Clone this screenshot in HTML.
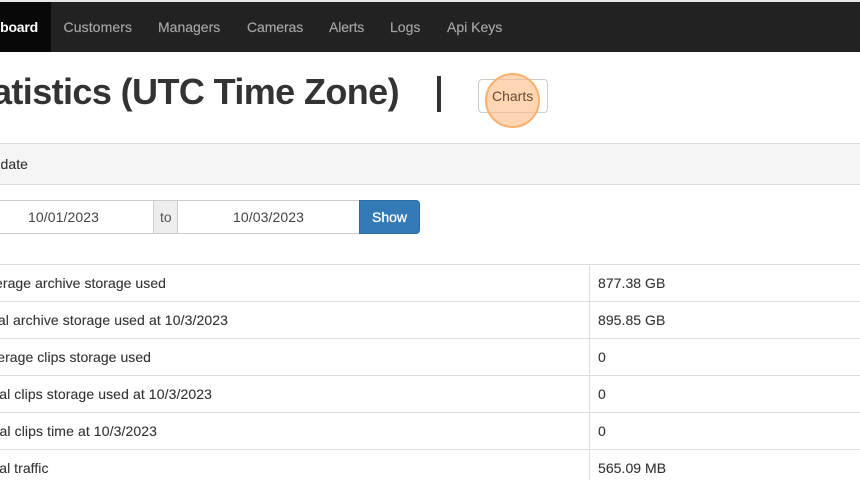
<!DOCTYPE html>
<html><head><meta charset="utf-8"><style>
*{box-sizing:border-box}
html,body{margin:0;padding:0}
body{width:860px;height:480px;overflow:hidden;background:#fff;position:relative;font:14px/20px "Liberation Sans",sans-serif;color:#333}
.a{position:absolute;white-space:nowrap}
.n{color:#a5a5a5;top:17px;-webkit-text-stroke:.15px #a5a5a5}
.t{letter-spacing:.05px;-webkit-text-stroke:.1px #333}
.w{letter-spacing:.1px}
.h{position:absolute;left:0;width:860px;height:1px;background:#ddd}
</style></head><body>
<div class="a" style="left:0;top:0;width:860px;height:2px;background:#e7e7e7"></div>
<div class="a" style="left:0;top:2px;width:860px;height:50px;background:#222"></div>
<div class="a" style="left:0;top:2px;width:51px;height:50px;background:#080808"></div>
<div class="a" style="right:822px;top:17px;color:#fff;font-weight:bold;letter-spacing:-.2px">Dashboard</div>
<div class="a n" style="left:63.5px;letter-spacing:.1px">Customers</div>
<div class="a n" style="left:158px">Managers</div>
<div class="a n" style="left:247px;letter-spacing:-.1px">Cameras</div>
<div class="a n" style="left:329px;letter-spacing:-.1px">Alerts</div>
<div class="a n" style="left:390px">Logs</div>
<div class="a n" style="left:447px">Api Keys</div>

<div class="a" style="right:461px;top:72px;font-size:36px;line-height:40px;font-weight:bold;letter-spacing:-.6px">Statistics (UTC Time Zone)</div>
<div class="a" style="left:437px;top:76px;width:4px;height:36px;background:#333"></div>
<div class="a" style="left:478px;top:79px;width:70px;height:34px;border:1px solid #ccc;border-radius:4px"></div>
<div class="a" style="left:485px;top:73px;width:55px;height:55px;border-radius:50%;background:rgba(253,186,130,.6);border:2px solid #fbb06d"></div>
<div class="a" style="left:492px;top:86px;color:#6b4a33">Charts</div>

<div class="a" style="left:0;top:143px;width:860px;height:42px;background:#f5f5f5;border-top:1px solid #ddd;border-bottom:1px solid #ddd"></div>
<div class="a t" style="right:832px;top:154px">Select date</div>

<div class="a" style="left:-20px;top:200px;width:174px;height:34px;border:1px solid #ccc;background:#fff"></div>
<div class="a" style="left:153px;top:200px;width:25px;height:34px;border:1px solid #ccc;background:#eee"></div>
<div class="a" style="left:178px;top:200px;width:182px;height:34px;border:1px solid #ccc;border-left:0;background:#fff"></div>
<div class="a" style="left:359px;top:200px;width:61px;height:34px;background:#337ab7;border:1px solid #2e6da4;border-radius:0 4px 4px 0"></div>
<div class="a" style="left:28px;top:207px;color:#444;letter-spacing:.1px">10/01/2023</div>
<div class="a" style="left:160px;top:207px;color:#555">to</div>
<div class="a" style="left:233px;top:207px;color:#444;letter-spacing:.1px">10/03/2023</div>
<div class="a" style="left:372px;top:207px;color:#fff;-webkit-text-stroke:.3px #fff">Show</div>

<div class="h" style="top:264px"></div>
<div class="h" style="top:301px"></div>
<div class="h" style="top:338px"></div>
<div class="h" style="top:375px"></div>
<div class="h" style="top:412px"></div>
<div class="h" style="top:449px"></div>
<div class="a" style="left:589px;top:264px;width:1px;height:216px;background:#ddd"></div>

<div class="a t" style="right:694px;top:273px">Average archive storage used</div>
<div class="a t w" style="right:632px;top:310px">Total archive storage used at 10/3/2023</div>
<div class="a t" style="right:709px;top:347px">Average clips storage used</div>
<div class="a t w" style="right:648px;top:384px">Total clips storage used at 10/3/2023</div>
<div class="a t w" style="right:703px;top:421px">Total clips time at 10/3/2023</div>
<div class="a t" style="right:811.5px;top:458px">Total traffic</div>

<div class="a t" style="left:598px;top:273px">877.38 GB</div>
<div class="a t" style="left:598px;top:310px">895.85 GB</div>
<div class="a t" style="left:598px;top:347px">0</div>
<div class="a t" style="left:598px;top:384px">0</div>
<div class="a t" style="left:598px;top:421px">0</div>
<div class="a t" style="left:598px;top:458px">565.09 MB</div>
</body></html>
